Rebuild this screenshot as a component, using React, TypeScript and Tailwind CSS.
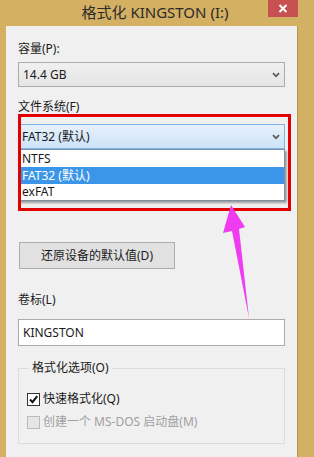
const font = { fontFamily: '"Noto Sans", "Noto Sans CJK SC", sans-serif' };

function Chevron() {
	return (
		<svg width="8" height="6" viewBox="0 0 8 6" className="shrink-0">
			<polyline points="1,1.2 4,4.3 7,1.2" fill="none" stroke="#5a5a5a" strokeWidth="1.8" />
		</svg>
	);
}

function Check() {
	return (
		<svg width="11" height="11" viewBox="0 0 11 11">
			<polyline points="2,5.5 4.5,8.2 9.2,2.2" fill="none" stroke="#111" strokeWidth="2" />
		</svg>
	);
}

export default function App() {
	return (
		<div
			className="relative w-[314px] h-[457px] overflow-hidden bg-[#d4b063] flex flex-col text-[12px] leading-[16px] text-[#1a1a1a]"
			style={font}
		>
			{/* title bar */}
			<div className="relative h-[26px] shrink-0 flex items-center justify-center">
				<span className="text-[15px] leading-[20px] text-[#2b2b2b] -mt-[2px] -ml-[4px]">
					格式化 KINGSTON (I:)
				</span>
				<div className="absolute top-0 right-[16px] w-[30px] h-[17px] bg-[#c75050] flex items-center justify-center">
					<svg width="10" height="9" viewBox="0 0 10 9">
						<path d="M1.5 1 L8.5 8 M8.5 1 L1.5 8" stroke="#fff" strokeWidth="2" />
					</svg>
				</div>
			</div>

			{/* client area */}
			<div className="ml-[6px] mr-[16px] flex-1 bg-[#f0f0f0] border-r border-[#b8994f] px-[12px] pt-[15px] flex flex-col">
				<div>容量(P):</div>
				<div className="mt-[5px] h-[25px] border border-[#acacac] bg-gradient-to-b from-[#f0f0f0] to-[#e5e5e5] flex items-center justify-between pl-[4px] pr-[4px]">
					<span>14.4 GB</span>
					<Chevron />
				</div>

				<div className="mt-[12px]">文件系统(F)</div>
				<div className="relative mt-[9px]">
					<div className="h-[25px] border border-[#7eb4ea] bg-gradient-to-b from-[#e7f1fb] to-[#cce3f8] flex items-center justify-between pl-[3px] pr-[4px]">
						<span>FAT32 (默认)</span>
						<Chevron />
					</div>
					{/* open list */}
					<div className="absolute left-0 right-0 top-[25px] bg-white border border-[#7d8fa3] shadow-[2px_2px_2px_rgba(0,0,0,0.35)] z-10">
						<div className="h-[17px] pl-[3px] flex items-center">NTFS</div>
						<div className="h-[17px] pl-[3px] flex items-center bg-[#3b96e9] text-white">FAT32 (默认)</div>
						<div className="h-[16px] pl-[3px] flex items-center">exFAT</div>
					</div>
				</div>

				<button className="mt-[93px] ml-[1px] w-[156px] h-[27px] border border-[#adadad] bg-[#e1e1e1] flex items-center justify-center">
					还原设备的默认值(D)
				</button>

				<div className="mt-[23px]">卷标(L)</div>
				<div className="mt-[11px] h-[27px] border border-[#acacac] bg-white flex items-center pl-[4px]">
					KINGSTON
				</div>

				<fieldset className="mt-[14px] border border-[#dcdcdc] pl-[8px] pb-[13px]">
					<legend className="ml-[2px] px-[3px] leading-[16px]">格式化选项(O)</legend>
					<label className="mt-[15px] flex items-center gap-[3px]">
						<span className="w-[13px] h-[13px] border border-[#333] bg-white flex items-center justify-center">
							<Check />
						</span>
						<span>快速格式化(Q)</span>
					</label>
					<label className="mt-[7px] flex items-center gap-[3px] text-[#a0a0a0]">
						<span className="w-[13px] h-[13px] border border-[#bcbcbc] bg-[#e6e6e6]" />
						<span>创建一个 MS-DOS 启动盘(M)</span>
					</label>
				</fieldset>
			</div>

			{/* red highlight box */}
			<div className="absolute left-[18px] top-[114px] w-[273px] h-[97px] border-[3px] border-[#e30000] z-20 pointer-events-none" />

			{/* magenta arrow */}
			<svg className="absolute left-0 top-0 z-30 pointer-events-none" width="314" height="457">
				<polygon
					points="231,205 245,227 239,229 249,318 232,231 223,233"
					fill="#f03cf0"
				/>
			</svg>
		</div>
	);
}
